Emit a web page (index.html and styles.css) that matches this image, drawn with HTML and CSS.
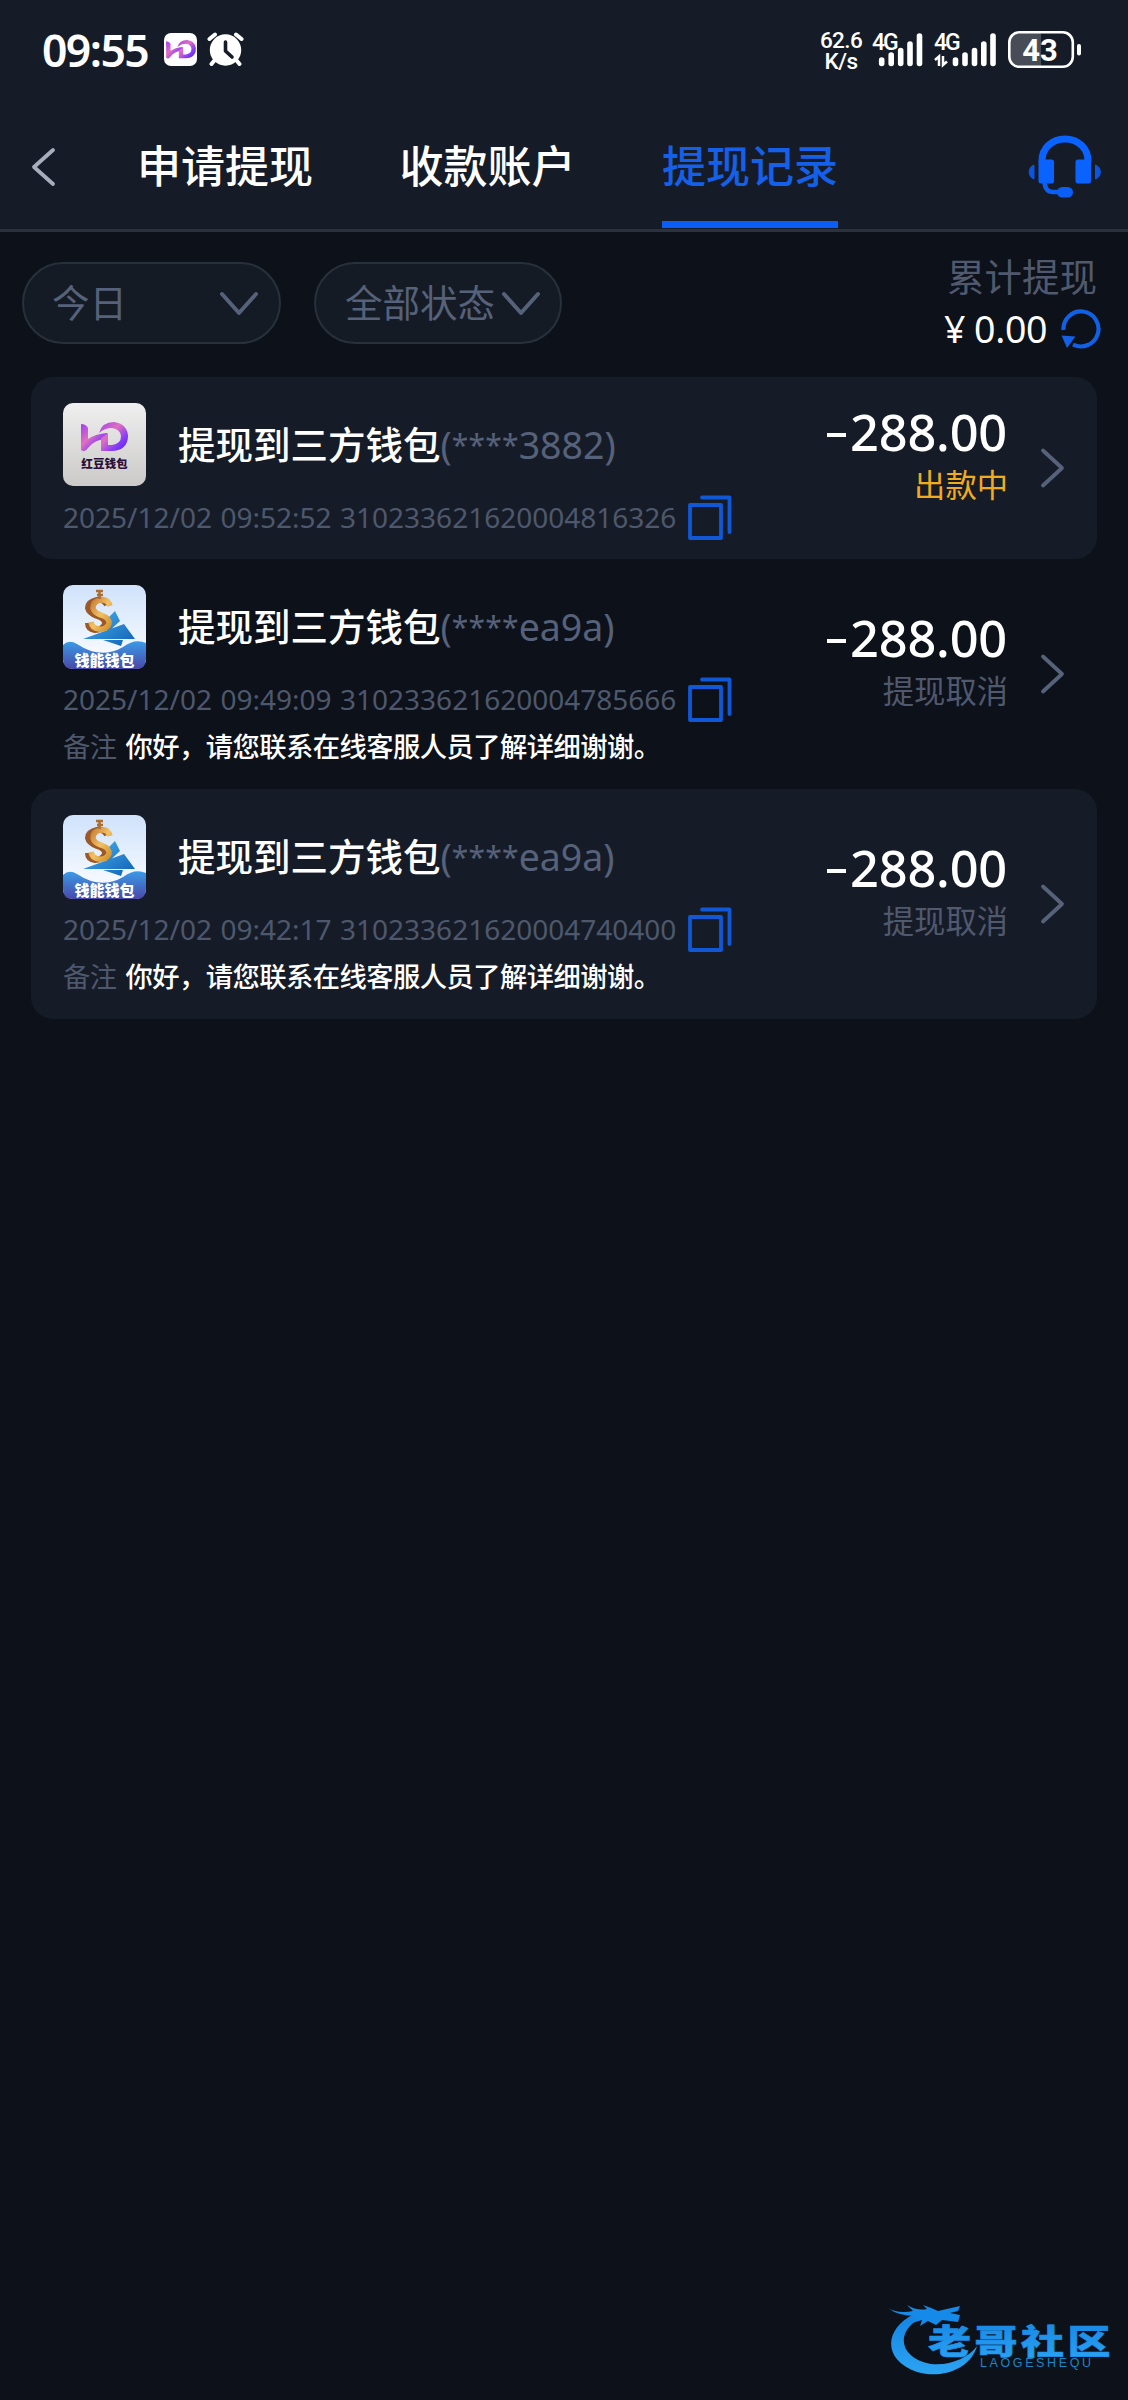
FILE: index.html
```html
<!DOCTYPE html>
<html lang="zh-CN">
<head>
<meta charset="utf-8">
<title>提现记录</title>
<link rel="stylesheet" href="styles.css">
</head>
<body>
<svg class="defs" width="0" height="0" aria-hidden="true">
  <defs>
    <linearGradient id="violet" x1="0" y1="0" x2="1" y2="1"><stop offset="0" stop-color="#a03ef0"/><stop offset=".4" stop-color="#e070c0"/><stop offset=".7" stop-color="#8a3df5"/><stop offset="1" stop-color="#4a22f0"/></linearGradient>
    <linearGradient id="silver" x1="0" y1="0" x2="0" y2="1"><stop offset="0" stop-color="#efefef"/><stop offset="1" stop-color="#cbcac8"/></linearGradient>
    <linearGradient id="sky" x1="0" y1="0" x2="0" y2="1"><stop offset="0" stop-color="#cfe2fb"/><stop offset="1" stop-color="#fff"/></linearGradient>
    <linearGradient id="sea" x1="0" y1="0" x2="0" y2="1"><stop offset="0" stop-color="#3a9be8"/><stop offset="1" stop-color="#4a48a8"/></linearGradient>
    <linearGradient id="gold" x1="0" y1="0" x2="1" y2="1"><stop offset="0" stop-color="#c47c34"/><stop offset=".5" stop-color="#f2c064"/><stop offset="1" stop-color="#d0902c"/></linearGradient>
    <linearGradient id="blue" x1="0" y1="0" x2="1" y2="1"><stop offset="0" stop-color="#4ab4f0"/><stop offset="1" stop-color="#0f5fb4"/></linearGradient>
    <symbol id="hd" viewBox="0 0 47 30">
      <path d="M0 2 Q5 2 7 6 V17 Q14 12 26 11 V17 Q14 17 7 26 Q4 31 0 28Z" fill="url(#violet)"/>
      <path d="M18 11 Q21 0 33 0 C43 1 47 8 47 14 C47 24 40 29 31 29 H20 V16 L27 11 V23 H31 Q40 22 40 14 Q39 7 31 6 Q24 6 18 11Z" fill="url(#violet)"/>
    </symbol>
    <symbol id="wallet-hd" viewBox="0 0 83 83">
      <rect width="83" height="83" rx="10" fill="url(#silver)"/>
      <use href="#hd" x="18" y="19" width="47" height="30"/>
      <text x="41.5" y="64.500" class="logo-text logo-dark">红豆钱包</text>
    </symbol>
    <symbol id="wallet-qn" viewBox="0 0 83 84">
      <rect width="83" height="84" rx="10" fill="url(#sky)"/>
      <path d="M0 60 Q6 54 14 59 Q38 75 60 62 Q72 53 83 58 V74 Q83 84 73 84 H10 Q0 84 0 74Z" fill="url(#sea)"/>
      <path d="M44 34 L52 26 L57 36 L44 48Z M20 54 L61 39 L72 54Z M40 55 H60 L58 61Z" fill="url(#blue)"/>
      <path d="M44 20 Q41 14 34 15 Q25 17 25 23 Q26 28 34 31 Q43 34 42 39 Q39 45 32 45 Q25 44 25 38" fill="none" stroke="#9c5826" stroke-width="6"/>
      <path d="M47 21 Q45 14 38 15 Q30 16 30 23 Q31 28 38 30 Q47 33 46 39 Q43 45 36 44 Q29 43 28 37" fill="none" stroke="url(#gold)" stroke-width="5.500"/>
      <path d="M33 6 H40 M34 10 H40 M36.500 6 V14" fill="none" stroke="#b06c2c" stroke-width="2.600"/>
      <text x="41.5" y="80.500" class="logo-text logo-light">钱能钱包</text>
    </symbol>
    <symbol id="copy" viewBox="0 0 44 46">
      <path d="M2 10 H33 V43 H2Z M14 2.500 H41.500 V37" fill="none" stroke="#1058d6" stroke-width="3.800" stroke-linecap="round" stroke-linejoin="round"/>
    </symbol>
    <symbol id="right" viewBox="0 0 26 42"><path d="M3 3.500 L22 21 L3 38.500" fill="none" stroke="#56617a" stroke-width="3.800" stroke-linecap="round" stroke-linejoin="round"/></symbol>
    <symbol id="down" viewBox="0 0 40 26"><path d="M3 3 L20 22 L37 3" fill="none" stroke="#56617a" stroke-width="4" stroke-linecap="round" stroke-linejoin="round"/></symbol>
  </defs>
</svg>

<header class="header">
  <div class="status-bar">
    <div class="status-left">
      <span class="clock">09:55</span>
      <span class="app-badge"><svg width="30" height="19"><use href="#hd" width="30" height="19"/></svg></span>
      <svg class="alarm" width="37" height="35" viewBox="0 0 37 35">
        <circle cx="18.500" cy="18" r="15.700" fill="#fff"/>
        <path d="M2.500 7 L8 2.500 M34.500 7 L29 2.500 M7 29 L4.500 32 M30 29 L32.500 32" stroke="#fff" stroke-width="4" stroke-linecap="round"/>
        <path d="M18.500 10 V19 L25 25" fill="none" stroke="#161c28" stroke-width="3.600" stroke-linecap="round" stroke-linejoin="round"/>
      </svg>
    </div>
    <div class="status-right">
      <div class="speed"><span>62.6</span><span>K/s</span></div>
      <svg class="signal" width="52" height="38" viewBox="0 0 52 38">
        <text x="0" y="18.500" class="net">4G</text>
        <path d="M9.700 29 V32.500 M19.200 24 V32.500 M28.700 19.500 V32.500 M38 13 V32.500 M47.500 5 V32.500" stroke="#fff" stroke-width="5.600" stroke-linecap="round"/>
      </svg>
      <svg class="signal" width="64" height="38" viewBox="0 0 64 38">
        <text x="0" y="18.500" class="net">4G</text>
        <path d="M1 29 L5 25.500 V35 M9 25 V34 L13 30.500" fill="none" stroke="#fff" stroke-width="2.500"/>
        <path d="M21.500 29 V32.500 M31 24 V32.500 M40.500 19.500 V32.500 M49.800 13 V32.500 M59 5 V32.500" stroke="#fff" stroke-width="5.600" stroke-linecap="round"/>
      </svg>
      <svg class="battery" width="74" height="38" viewBox="0 0 74 38">
        <path d="M12 2 H33 V35.500 H12 Q2 35.500 2 26 V12 Q2 2 12 2Z" fill="#484c56"/>
        <rect x="1.300" y="1.300" width="63.500" height="34.500" rx="10" fill="none" stroke="#fff" stroke-width="2.600"/>
        <rect x="69" y="13" width="4" height="11.500" rx="2" fill="#fff"/>
        <text x="32" y="29.500" class="charge">43</text>
      </svg>
    </div>
  </div>
  <nav class="nav">
    <svg class="back" width="26" height="40" viewBox="0 0 26 40"><path d="M22 3 L3 20 L22 37" fill="none" stroke="#a7adba" stroke-width="3.800" stroke-linecap="round" stroke-linejoin="round"/></svg>
    <div class="tabs">
      <a class="tab">申请提现</a>
      <a class="tab">收款账户</a>
      <a class="tab active">提现记录</a>
    </div>
    <svg class="service" width="74" height="64" viewBox="0 0 74 64">
      <path d="M14 27 V26 C14 13 24 4 37 4 C50 4 60 13 60 26 V27" fill="none" stroke="#0b63ff" stroke-width="7"/>
      <rect x="10.500" y="24.500" width="15.500" height="24" rx="2.500" fill="#0b63ff"/>
      <rect x="47.500" y="24.500" width="15.500" height="24" rx="2.500" fill="#0b63ff"/>
      <path d="M6 30 V44 A7.500 7.500 0 0 1 6 30Z M67.500 30 V44 A7.500 7.500 0 0 0 67.500 30Z" fill="#0b55e0" stroke="#0b55e0" stroke-width="1"/>
      <path d="M16.500 47 Q17 57 25 57 H31" fill="none" stroke="#0b5ff5" stroke-width="4.500"/>
      <rect x="29" y="52" width="16" height="10.500" rx="5.200" fill="#0b5ff5"/>
    </svg>
  </nav>
</header>

<section class="filters">
  <div class="select select-date"><span>今日</span><svg width="40" height="26"><use href="#down"/></svg></div>
  <div class="select select-state"><span>全部状态</span><svg width="40" height="26"><use href="#down"/></svg></div>
  <div class="total">
    <div class="total-label">累计提现</div>
    <div class="total-row">
      <span class="yen">¥</span><span class="total-value">0.00</span>
      <svg width="42" height="42" viewBox="0 0 42 42">
        <path d="M3.500 22 A17.500 17.500 0 1 1 13 36.500" fill="none" stroke="#1260e6" stroke-width="4.200"/>
        <path d="M1.500 27.500 L15.500 28.500 L7 40Z" fill="#1260e6"/>
      </svg>
    </div>
  </div>
</section>

<main class="records">
  <article class="record shaded">
    <div class="info">
      <div class="title-row"><svg class="logo" width="83" height="83"><use href="#wallet-hd"/></svg><h2>提现到三方钱包<span>(<b>****</b>3882)</span></h2></div>
      <div class="order-row"><span>2025/12/02 09:52:52 310233621620004816326</span><svg width="44" height="46"><use href="#copy"/></svg></div>
    </div>
    <div class="result"><div class="amount"><i class="minus"></i>288.00</div><div class="state paying">出款中</div></div>
    <svg class="arrow" width="26" height="42"><use href="#right"/></svg>
  </article>

  <article class="record">
    <div class="info">
      <div class="title-row"><svg class="logo" width="83" height="84"><use href="#wallet-qn"/></svg><h2>提现到三方钱包<span>(<b>****</b>ea9a)</span></h2></div>
      <div class="order-row"><span>2025/12/02 09:49:09 310233621620004785666</span><svg width="44" height="46"><use href="#copy"/></svg></div>
      <p class="note"><span>备注</span>你好，请您联系在线客服人员了解详细谢谢。</p>
    </div>
    <div class="result"><div class="amount"><i class="minus"></i>288.00</div><div class="state">提现取消</div></div>
    <svg class="arrow" width="26" height="42"><use href="#right"/></svg>
  </article>

  <article class="record shaded">
    <div class="info">
      <div class="title-row"><svg class="logo" width="83" height="84"><use href="#wallet-qn"/></svg><h2>提现到三方钱包<span>(<b>****</b>ea9a)</span></h2></div>
      <div class="order-row"><span>2025/12/02 09:42:17 310233621620004740400</span><svg width="44" height="46"><use href="#copy"/></svg></div>
      <p class="note"><span>备注</span>你好，请您联系在线客服人员了解详细谢谢。</p>
    </div>
    <div class="result"><div class="amount"><i class="minus"></i>288.00</div><div class="state">提现取消</div></div>
    <svg class="arrow" width="26" height="42"><use href="#right"/></svg>
  </article>
</main>

<footer class="footer">
  <svg width="228" height="76" viewBox="0 0 228 76">
    <defs><linearGradient id="wm" x1="0" y1="0" x2="0" y2="1"><stop offset="0" stop-color="#1583e2"/><stop offset="1" stop-color="#2ba4f2"/></linearGradient></defs>
    <path d="M26 11 C-4 26 -6 57 29 69 C58 77 84 63 89 43 C80 55 62 63 43 61 C16 56 8 36 24 21 C28 17 34 15 38 13Z" fill="url(#wm)"/>
    <path d="M0 5 Q10 11 25 8 L19 2 Q29 8 39 6 L35 2 Q44 5 50 8 L72 3 L70 8 L62 10 L72 12 L70 19 L54 17 L48 22 L40 18 L32 23 L34 17 L24 20 L28 13 Q10 13 0 5Z" fill="#168ae8"/>
    <text x="0" y="0" class="brand" transform="translate(40 50.500) scale(1 .78)">老哥社区</text>
    <text x="92" y="63.500" class="brand-latin" textLength="111">LAOGESHEQU</text>
  </svg>
</footer>
</body>
</html>
```
FILE: styles.css
```css
* { box-sizing: border-box; }
body {
  margin: 0;
  width: 1128px;
  min-height: 2400px;
  display: flex;
  flex-direction: column;
  background: #0d1119;
  color: #fff;
  font-family: "Noto Sans", "Noto Sans CJK SC", sans-serif;
}
.defs { position: absolute; }
svg { display: block; flex: none; }

.header {
  height: 232px;
  background: #161c27;
  border-bottom: 3px solid #2b323e;
  display: flex;
  flex-direction: column;
}
.status-bar {
  height: 102px;
  display: flex;
  justify-content: space-between;
  padding: 31px 46px 0 42px;
}
.status-left, .status-right { display: flex; align-items: flex-start; }
.clock {
  width: 122px;
  font: 600 44.500px/38px "Noto Sans", sans-serif;
  letter-spacing: -1.600px;
}
.app-badge {
  width: 33px;
  height: 33px;
  margin: 2px 10px 0 0;
  border-radius: 7px;
  background: #fff;
  display: flex;
  align-items: center;
  justify-content: center;
}
.alarm { margin-top: 1px; }
.speed {
  width: 42px;
  margin-right: 10px;
  display: flex;
  flex-direction: column;
  align-items: center;
  font: 500 22.500px/21px Roboto, sans-serif;
  letter-spacing: -.6px;
  margin-top: -1px;
}
.signal { margin-right: 10px; overflow: visible; }
.net { font: 500 23px Roboto, sans-serif; fill: #fff; letter-spacing: -2px; }
.charge { font: 700 31px Roboto, sans-serif; fill: #fff; text-anchor: middle; }

.nav { flex: 1; display: flex; padding: 0 26px 0 31px; }
.back { margin: 45px 80px 0 0; }
.tabs { flex: 1; display: flex; gap: 86.500px; }
.tab {
  height: 126px;
  padding-top: 2px;
  font-size: 44px;
  line-height: 124px;
  font-weight: 500;
  border-bottom: 7px solid transparent;
}
.tab.active { color: #1560e8; border-color: #0a5df5; }
.service { margin-top: 33px; }

.filters {
  height: 145px;
  display: flex;
  align-items: flex-start;
  padding: 30px 26px 0 22px;
}
.select {
  height: 82px;
  border: 2px solid #28303c;
  border-radius: 41px;
  background: #141b25;
  color: #56617a;
  font-size: 37.500px;
  line-height: 78px;
  display: flex;
  justify-content: space-between;
}
.select svg { margin-top: 27px; }
.select-date { width: 259px; margin-right: 33px; padding: 0 20px 0 28px; }
.select-state { width: 248px; padding: 0 19px 0 29px; }
.total { margin-left: auto; display: flex; flex-direction: column; align-items: flex-end; }
.total-label { font-size: 37.500px; line-height: 48px; color: #50596e; margin: -9px 5px 0 0; }
.total-row { display: flex; font-size: 37.500px; line-height: 48px; margin-top: 4px; }
.yen { width: 30px; }
.total-value { width: 86px; letter-spacing: -.3px; }
.total-row svg { margin-top: 3px; }

.records { flex: 1; padding: 0 31px; }
.record {
  display: flex;
  align-items: center;
  height: 230px;
  padding: 0 31px 0 32px;
  border-radius: 22px;
}
.record:first-child { height: 182px; }
.shaded { background: #161c27; }
.info { flex: 1; align-self: flex-start; padding-top: 26px; }
.title-row { display: flex; align-items: center; height: 84px; }
.record:first-child .logo { margin-bottom: 1px; }
.logo { margin-right: 32px; }
.title-row h2 { margin: 0; font-size: 37.500px; font-weight: 500; line-height: 60px; }
.title-row h2 span { font-weight: 400; color: #56617a; }
.title-row h2 b { font-size: 30px; font-weight: 400; line-height: 30px; vertical-align: 3px; letter-spacing: .2px; }
.order-row { display: flex; align-items: center; height: 60px; color: #4e586d; font-size: 28px; }
.order-row span { word-spacing: 1.200px; }
.order-row svg { margin: 2px 0 0 12px; }
.note { margin: 0; font-size: 27.300px; line-height: 36px; font-weight: 500; letter-spacing: -.55px; }
.note span { font-weight: 400; color: #4e586d; margin-right: 9px; }
.result { text-align: right; margin: -26px 32px 0 0; }
.amount { display: flex; align-items: center; justify-content: flex-end; font-size: 50.500px; line-height: 60px; font-weight: 500; letter-spacing: -.2px; padding-right: 1px; }
.minus { width: 19px; height: 4px; margin: 5px 4px 0 0; background: #fff; }
.state { font-size: 31.300px; line-height: 46px; color: #50596e; }
.state.paying { color: #f0ac1e; }

.logo-text { font: 900 11.600px "Noto Sans CJK SC", sans-serif; text-anchor: middle; }
.logo-dark { fill: #2a1038; }
.logo-light { fill: #fff; font-size: 15px; }

.footer { display: flex; justify-content: flex-end; padding: 0 12px 21px 0; }
.brand { font: 900 43px "Noto Sans CJK SC", sans-serif; letter-spacing: 3.500px; fill: url(#wm); stroke: #1b90ea; stroke-width: .8px; }
.brand-latin { font: 400 12.500px "Liberation Sans", sans-serif; fill: #1c84c8; }
```
